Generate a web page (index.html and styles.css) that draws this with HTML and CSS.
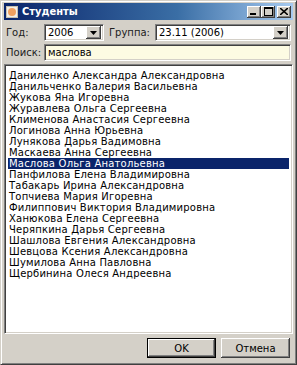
FILE: index.html
```html
<!DOCTYPE html>
<html lang="ru">
<head>
  <meta charset="UTF-8">
  <title>Студенты</title>
  <link rel="stylesheet" href="styles.css">
</head>
<body>

<div class="window">
  <div class="titlebar">
    <span class="app-icon"><span class="dot"></span></span>
    <span class="title">Студенты</span>
    <div class="caption-buttons">
      <span class="cap-btn">
        <svg width="8" height="7" viewBox="0 0 8 7"><rect x="0" y="5" width="6" height="2" fill="#000"/></svg>
      </span>
      <span class="cap-btn">
        <svg width="9" height="9" viewBox="0 0 9 9"><rect x="0.5" y="0.5" width="8" height="8" fill="none" stroke="#000"/><rect x="0" y="0" width="9" height="2" fill="#000"/></svg>
      </span>
      <span class="cap-btn close-btn">
        <svg width="8" height="7" viewBox="0 0 8 7"><path d="M0 0L8 7M8 0L0 7" stroke="#000" stroke-width="1.6"/></svg>
      </span>
    </div>
  </div>

  <div class="filters">
    <div class="row">
      <label class="lbl">Год:</label>
      <div class="combo year">
        <span class="value">2006</span>
        <span class="drop"><svg width="7" height="4" viewBox="0 0 7 4"><path d="M0 0H7L3.5 4Z" fill="#000"/></svg></span>
      </div>
      <label class="lbl group-lbl">Группа:</label>
      <div class="combo group">
        <span class="value">23.11 (2006)</span>
        <span class="drop"><svg width="7" height="4" viewBox="0 0 7 4"><path d="M0 0H7L3.5 4Z" fill="#000"/></svg></span>
      </div>
    </div>
    <div class="row">
      <label class="lbl">Поиск:</label>
      <div class="search">маслова</div>
    </div>
  </div>

  <div class="list" id="studentList"></div>

  <div class="footer">
    <button class="btn default">OK</button>
    <button class="btn">Отмена</button>
  </div>
</div>

<script>
  const students = [
    "Даниленко Александра Александровна",
    "Данильченко Валерия Васильевна",
    "Жукова Яна Игоревна",
    "Журавлева Ольга Сергеевна",
    "Клименова Анастасия Сергеевна",
    "Логинова Анна Юрьевна",
    "Лунякова Дарья Вадимовна",
    "Маскаева Анна Сергеевна",
    "Маслова Ольга Анатольевна",
    "Панфилова Елена Владимировна",
    "Табакарь Ирина Александровна",
    "Топчиева Мария Игоревна",
    "Филиппович Виктория Владимировна",
    "Ханюкова Елена Сергеевна",
    "Черяпкина Дарья Сергеевна",
    "Шашлова Евгения Александровна",
    "Шевцова Ксения Александровна",
    "Шумилова Анна Павловна",
    "Щербинина Олеся Андреевна"
  ];
  const selected = 8;

  const list = document.getElementById("studentList");
  students.forEach((name, index) => {
    const item = document.createElement("div");
    item.className = "item" + (index === selected ? " selected" : "");
    item.textContent = name;
    list.appendChild(item);
  });
</script>

</body>
</html>
```

FILE: styles.css
```css
body {
  margin: 0;
  padding: 0;
  background: #d4d0c8;
  font-family: "DejaVu Sans", sans-serif;
  font-size: 10px;
  color: #000;
}
.window {
  box-sizing: border-box;
  width: 297px;
  height: 365px;
  padding: 2px 3px 3px 3px;
  background: #d4d0c8;
  border: 1px solid;
  border-color: #d4d0c8 #404040 #404040 #d4d0c8;
  box-shadow: inset 1px 1px 0 #fff, inset -1px -1px 0 #808080;
  display: flex;
  flex-direction: column;
}
.titlebar {
  height: 17px;
  display: flex;
  align-items: center;
  padding: 0 2px;
  background: linear-gradient(to right, #0a246a, #3a6ea5 60%, #a6caf0);
  color: #fff;
}
.app-icon {
  width: 12px;
  height: 12px;
  background: #f4f0e8;
  border: 1px solid #c8c0b0;
  box-sizing: border-box;
  display: flex;
  align-items: center;
  justify-content: center;
  margin-right: 4px;
}
.app-icon .dot {
  width: 8px;
  height: 8px;
  border-radius: 50%;
  background: #f0a060;
}
.title {
  font-family: "DejaVu Sans Condensed", "DejaVu Sans", sans-serif;
  font-weight: bold;
  font-size: 11px;
  flex: 1;
}
.caption-buttons {
  display: flex;
}
.cap-btn {
  width: 14px;
  height: 12px;
  background: #d4d0c8;
  display: flex;
  align-items: center;
  justify-content: center;
  box-shadow: inset -1px -1px 0 #404040, inset 1px 1px 0 #fff, inset -2px -2px 0 #808080;
}
.close-btn {
  margin-left: 2px;
}
.filters {
  padding: 4px 2px 0 2px;
}
.row {
  display: flex;
  align-items: center;
  margin-bottom: 3px;
}
.lbl {
  width: 38px;
  color: #202020;
}
.group-lbl {
  width: auto;
  margin: 0 5px 0 5px;
}
.combo, .search {
  box-sizing: border-box;
  height: 17px;
  background: #fff;
  border: 1px solid;
  border-color: #808080 #fff #fff #808080;
  box-shadow: inset 1px 1px 0 #404040, inset -1px -1px 0 #d4d0c8;
  display: flex;
  align-items: center;
  padding: 0 2px 0 3px;
}
.combo.year {
  width: 60px;
}
.combo.group {
  flex: 1;
}
.combo .value {
  flex: 1;
}
.drop {
  width: 15px;
  height: 13px;
  background: #d4d0c8;
  display: flex;
  align-items: center;
  justify-content: center;
  box-shadow: inset -1px -1px 0 #404040, inset 1px 1px 0 #fff, inset -2px -2px 0 #808080;
}
.search {
  flex: 1;
  background: #fdfbe3;
}
.list {
  flex: 1;
  background: #fff;
  border: 1px solid;
  border-color: #808080 #fff #fff #808080;
  box-shadow: inset 1px 1px 0 #404040, inset -1px -1px 0 #d4d0c8;
  padding: 5px 3px 4px 3px;
}
.item {
  height: 11px;
  line-height: 11px;
  padding-left: 1px;
  letter-spacing: 0.2px;
  white-space: nowrap;
  overflow: hidden;
}
.item.selected {
  background: #0a246a;
  color: #fff;
}
.footer {
  display: flex;
  justify-content: flex-end;
  gap: 5px;
  padding: 4px 3px 3px 0;
}
.btn {
  width: 69px;
  height: 20px;
  background: #d4d0c8;
  font-family: "DejaVu Sans", sans-serif;
  font-size: 10px;
  color: #000;
  border: none;
  box-shadow: inset -1px -1px 0 #404040, inset 1px 1px 0 #fff, inset -2px -2px 0 #808080;
}
.btn.default {
  outline: 1px solid #000;
  outline-offset: -1px;
  box-shadow: inset -2px -2px 0 #404040, inset 2px 2px 0 #fff, inset -3px -3px 0 #808080;
}
```
